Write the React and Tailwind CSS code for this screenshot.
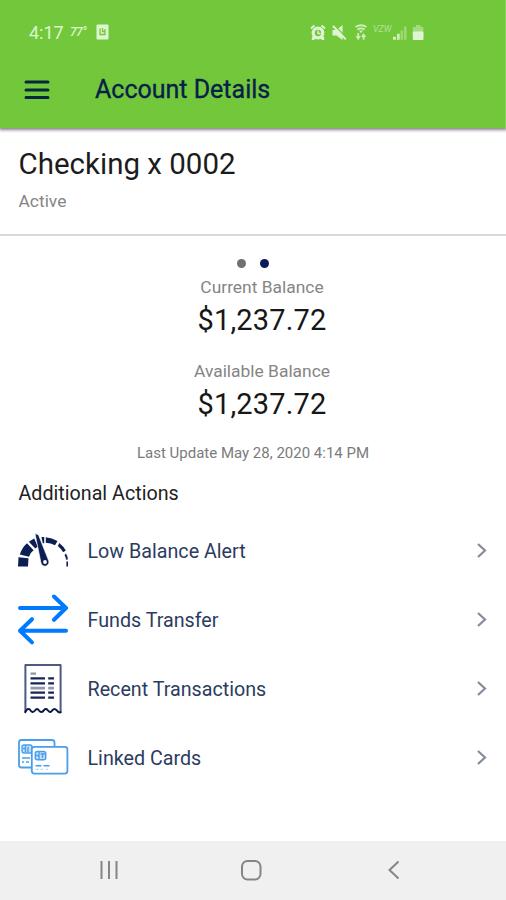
import React from "react";

// Icons on the left of each action row, all drawn on a 52x52 grid
function GaugeIcon() {
  return (
    <svg width="52" height="52" viewBox="0 0 52 52" fill="#0c1f52">
      <path d="M1 41.5 L1.5 32.3 L11.5 33.3 L11 41.5 Z" />
      <path d="M2.8 29.5 Q5 22.5 10 18.2 L16.6 25.3 Q13 28 12 31.7 Z" />
      <path d="M11.8 16.8 L17.2 13.6 L20.8 21.6 L18.3 23.5 Z" />
      <path d="M24.5 12 L27.2 12.1 L27.2 18.2 L25.8 18.2 Z" />
      <path d="M28.8 12.3 Q35 12.8 40.5 16.1 L38 20.2 Q34 18.1 28.8 17.7 Z" />
      <path d="M42.3 18.1 Q46.5 21.5 48.8 25.6 L46.2 27.3 Q44 23.5 40.9 20.9 Z" />
      <path d="M49 28.5 Q50.8 31.5 50.8 34.5 L49.2 34.8 Q49 32.5 47.5 30 Z" />
      <path d="M49.4 36.5 H51 V41.5 H49.4 Z" />
      <path
        d="M18 8.6 L21.4 9.8 L31.6 35.6 A4 4 0 1 1 24 38 Z"
        stroke="#fff"
        strokeWidth="0.6"
      />
      <circle cx="28" cy="37" r="1.9" fill="#fff" />
    </svg>
  );
}

function TransferIcon() {
  return (
    <svg
      width="52" height="52" viewBox="0 0 52 52"
      fill="none" stroke="#007aff" strokeWidth="4"
      strokeLinecap="round" strokeLinejoin="round"
    >
      <path d="M3 14 H49 M37 2.5 L49 14 L37 25.8" />
      <path d="M49 36.7 H3 M15 25.2 L3 36.7 L15 48.4" />
    </svg>
  );
}

function ReceiptIcon() {
  return (
    <svg width="52" height="52" viewBox="0 0 52 52" fill="none">
      <path d="M8.4 49 V2 H43.6 V49" stroke="#4b5b82" strokeWidth="2" strokeLinejoin="round" />
      <path
        d="M8.2 49.2 Q10.5 44.5 12.8 46.5 Q15.5 50.8 18 47.5 Q20 44.7 22 47.5 Q24.5 50.8 27 47.1 Q29 44.7 31 47.5 Q33.5 50.8 35.5 47.1 Q37.5 44.7 39.5 47.1 Q42 50.3 43.8 49.2"
        stroke="#0b1740" strokeWidth="2" strokeLinecap="round"
      />
      <path d="M13.5 10.6 H19" stroke="#92949e" strokeWidth="2.2" />
      <path
        d="M13.5 15.4 H28 M31.2 15.4 H37 M13.5 20.4 H28 M31.2 20.4 H37 M13.5 29.7 H28 M31.2 29.7 H37 M13.5 34.7 H28 M31.2 34.7 H37"
        stroke="#17255a" strokeWidth="2.2"
      />
      <path d="M13.5 25.1 H28 M31.2 25.1 H37" stroke="#9499a5" strokeWidth="2.6" />
    </svg>
  );
}

function CardsIcon() {
  return (
    <svg width="52" height="52" viewBox="0 0 52 52" fill="none" stroke="#4b9eea">
      <rect x="2" y="8" width="35.5" height="27.5" rx="2.5" fill="#fff" strokeWidth="1.8" />
      <rect x="5" y="13" width="10" height="8" rx="2" fill="#c4e0fb" strokeWidth="1.4" />
      <path d="M8.5 13.5 V20 M8.5 16.5 H6 M11 15 V20" strokeWidth="1.4" />
      <path d="M5 26 H13 M5 30 H7 M9 30 H12" strokeWidth="1.4" />
      <rect x="14.8" y="14.8" width="35.6" height="26.8" rx="2.5" fill="#fff" strokeWidth="1.8" />
      <rect x="18.3" y="19.6" width="10.4" height="8.2" rx="2" fill="#c4e0fb" strokeWidth="1.5" />
      <path d="M22 20 V27 M22 23.5 H19 M25.5 22 V26 M23.5 22 H28" strokeWidth="1.4" />
      <path d="M18.5 33.7 H24.5 M26.5 33.7 H32.5" strokeWidth="1.5" />
      <path d="M18.5 37.4 H22 M23.5 37.4 H26 M29 37.4 H31" stroke="#b9dcf8" strokeWidth="1.2" />
    </svg>
  );
}

// Right part of the status bar
function StatusIcons() {
  return (
    <svg width="116" height="20" viewBox="0 0 116 20" fill="#dff5d2" stroke="none">
      {/* alarm */}
      <path d="M1.8 15.5 L4 12.5 L6 16 L4 18 H1.8 Z M14.2 15.5 L12 12.5 L10 16 L12 18 H14.2 Z" />
      <circle cx="8" cy="11" r="4.8" fill="none" stroke="#dff5d2" strokeWidth="3.2" />
      <path d="M8 8.5 V11.5 H10.5" fill="none" stroke="#dff5d2" strokeWidth="1.3" />
      <path d="M1 6.5 L4.5 3.5 M15 6.5 L11.5 3.5" stroke="#dff5d2" strokeWidth="2" />
      {/* muted speaker */}
      <path d="M22.5 8 H26.5 L32.5 3 V18 L26.5 13.5 H22.5 Z" />
      <path d="M24.4 3.2 L36.5 15.9" stroke="#72c83a" strokeWidth="1.4" />
      <path d="M23 4 L35.8 17.4" stroke="#dff5d2" strokeWidth="2" />
      {/* wifi with traffic arrows */}
      <g opacity="0.85">
        <path d="M45.5 5 Q51 1.5 56.5 5 M47.5 7.6 Q51 5.2 54.5 7.6" fill="none" stroke="#dff5d2" strokeWidth="1.9" />
        <path d="M49 8.6 H53 L51 11.2 Z" />
        <path d="M48.2 11 V15 M53.6 17.8 V14" stroke="#dff5d2" strokeWidth="1.8" />
        <path d="M45.6 14 H50.8 L48.2 18.2 Z M51 15 H56.2 L53.6 11 Z" />
      </g>
      {/* signal */}
      <path d="M83 14.8 H86 V17.8 H83 Z M87 11.8 H89.7 V17.8 H87 Z" opacity="0.85" />
      <path d="M90.6 8.6 H93 V17.8 H90.6 Z M94 4.5 H96.5 V17.8 H94 Z" opacity="0.4" />
      {/* battery */}
      <path d="M106 3 H110.5 V5 H113.3 V10 H102.8 V5 H106 Z" opacity="0.45" />
      <rect x="102.8" y="9.5" width="10.7" height="8.5" rx="1" />
    </svg>
  );
}

const ACTIONS = [
  { label: "Low Balance Alert", Icon: GaugeIcon },
  { label: "Funds Transfer", Icon: TransferIcon },
  { label: "Recent Transactions", Icon: ReceiptIcon },
  { label: "Linked Cards", Icon: CardsIcon },
];

function Balance({ label, amount }) {
  return (
    <div className="flex flex-col items-center">
      <p className="text-[17.4px] leading-[20px] text-[#858585]">{label}</p>
      <p className="mt-[6px] text-[29px] leading-[34px] tracking-[0.15px] text-[#171717]">{amount}</p>
    </div>
  );
}

export default function App() {
  return (
    <div
      className="flex h-[900px] w-[506px] flex-col overflow-hidden bg-white"
      style={{ fontFamily: "Roboto, sans-serif" }}
    >
      {/* Status bar + app bar */}
      <header className="relative h-[128px] shrink-0 border-r border-[#8bd25e] bg-[#72c83a] shadow-[0_1px_3px_1px_rgba(60,45,60,0.6)]">
        <div className="flex h-[64px] items-center pl-[29px] text-[#dff5d2]">
          <span className="w-[41px] pt-[2px] text-[18px] leading-[20px]">4:17</span>
          <span className="w-[26px] pb-px text-[12px] font-medium italic leading-[16px] tracking-[-0.5px]">77°</span>
          <svg width="13" height="16" viewBox="0 0 13 16">
            <rect x="0.5" y="0.5" width="12" height="15" rx="1" fill="#dff5d2" />
            <path d="M4 4.5 V10.5 H9 V5 M6.5 4 V7.5 H8.5" fill="none" stroke="#72c83a" strokeWidth="1.3" />
          </svg>
          <div className="relative ml-[201px]">
            <StatusIcons />
            <span className="absolute left-[63px] top-[2px] text-[9px] italic leading-[10px] opacity-60">VZW</span>
          </div>
        </div>
        <div className="flex h-[51px] items-center pl-[24px]">
          <svg width="26" height="20" viewBox="0 0 26 20" stroke="#06283f" strokeWidth="3" strokeLinecap="round">
            <path d="M2 2 H24 M2 10 H24 M2 17.5 H24" />
          </svg>
          <h1 className="ml-[45px] text-[25px] font-normal leading-[30px] text-[#06204a] [-webkit-text-stroke:0.35px_#06204a]">
            Account Details
          </h1>
        </div>
      </header>

      {/* Account name */}
      <section className="h-[108px] shrink-0 border-b-2 border-[#d9d9d9] pl-[18.5px] pt-[19px]">
        <h2 className="text-[29.5px] leading-[34px] text-[#1c1c1c]">Checking x 0002</h2>
        <p className="mt-[10px] text-[17.4px] leading-[21px] text-[#858585]">Active</p>
      </section>

      {/* Balances */}
      <section className="flex shrink-0 flex-col items-center pt-[23px]">
        <div className="mb-[9px] flex gap-[14px]">
          <span className="size-[9px] rounded-full bg-[#707070]" />
          <span className="size-[9px] rounded-full bg-[#081c56]" />
        </div>
        <div className="flex flex-col gap-[24px] pl-[18px]">
          <Balance label="Current Balance" amount="$1,237.72" />
          <Balance label="Available Balance" amount="$1,237.72" />
        </div>
        <p className="mt-[23px] text-[15px] leading-[18px] text-[#7b7b7b]">Last Update May 28, 2020 4:14 PM</p>
      </section>

      {/* Actions */}
      <h3 className="mt-[22px] pl-[18.5px] text-[19.7px] leading-[20px] text-[#222]">Additional Actions</h3>
      <ul className="mt-[12px]">
        {ACTIONS.map(({ label, Icon }) => (
          <li key={label} className="flex h-[69px] items-center pl-[17px] pr-[18px]">
            <Icon />
            <span className="ml-[18.5px] flex-1 pt-[2px] text-[19.7px] text-[#2c3c60]">{label}</span>
            <svg width="12" height="18" viewBox="0 0 12 18" fill="none" stroke="#858b9a" strokeWidth="2.2">
              <path d="M2 2 L9 8.5 L2 15" />
            </svg>
          </li>
        ))}
      </ul>

      {/* Android navigation */}
      <nav className="mt-auto flex h-[59px] shrink-0 items-center bg-[#f0f0f0] pb-px text-[#858585]">
        <svg className="ml-[100px]" width="20" height="20" viewBox="0 0 20 20" stroke="currentColor" strokeWidth="2">
          <path d="M1.5 1 V19 M9 1 V19 M16.5 1 V19" />
        </svg>
        <svg className="ml-[120px]" width="22" height="22" viewBox="0 0 22 22" fill="none" stroke="currentColor" strokeWidth="2">
          <rect x="2" y="2" width="18.5" height="18.5" rx="5.5" />
        </svg>
        <svg className="ml-[126px]" width="12" height="20" viewBox="0 0 12 20" fill="none" stroke="currentColor" strokeWidth="2">
          <path d="M10.5 1.5 L1.5 10 L10.5 18.5" />
        </svg>
      </nav>
    </div>
  );
}
